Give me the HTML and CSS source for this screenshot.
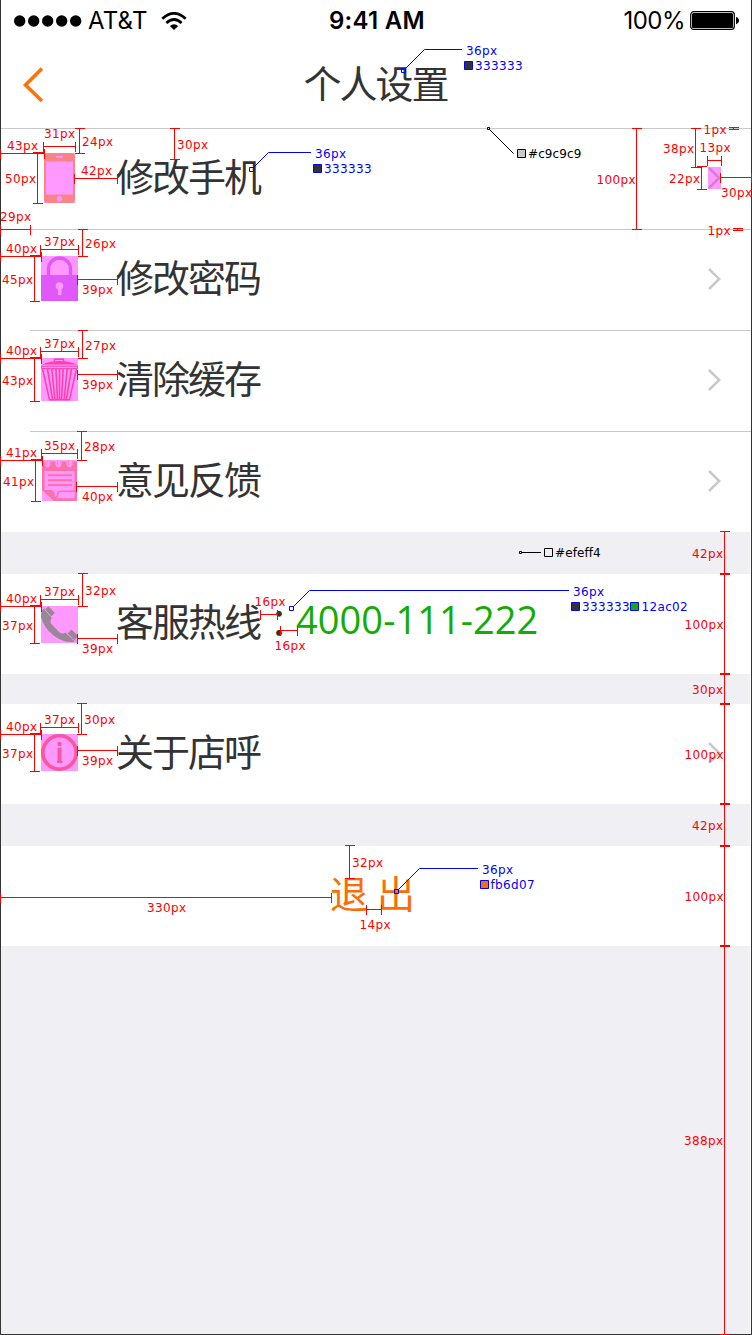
FILE: index.html
```html
<!DOCTYPE html>
<html lang="zh-CN">
<head>
<meta charset="utf-8">
<title>个人设置</title>
<link rel="stylesheet" href="styles.css">
</head>
<body>
<div class="screen">
  <header class="status">
    <div class="status-side">
      <svg class="signal" width="68" height="12" viewBox="0 0 68 12"><circle cx="5.7" cy="6" r="5.7"/><circle cx="19.7" cy="6" r="5.7"/><circle cx="33.7" cy="6" r="5.7"/><circle cx="47.7" cy="6" r="5.7"/><circle cx="61.7" cy="6" r="5.7"/></svg>
      <span class="carrier">AT&amp;T</span>
      <svg class="wifi" width="26" height="18" viewBox="0 0 26 18" fill="none" stroke="#000" stroke-width="2.8"><path d="M1.3 6.8Q13-4 24.7 6.8M5.4 11Q13 4 20.6 11"/><path d="M8.8 14Q13 10.5 17.2 14L13 18Z" fill="#000" stroke="none"/></svg>
    </div>
    <span class="time">9:41 AM</span>
    <div class="status-side status-right">
      <span class="percent">100%</span>
      <svg class="battery" width="50" height="20" viewBox="0 0 50 20"><rect x=".7" y=".7" width="43.6" height="17.8" rx="3" fill="none" stroke="#000" stroke-width="1.2"/><rect x="2" y="2" width="41" height="15.2" rx="1.5"/><path d="M46 6q3 1 3 3.6T46 13.200z"/></svg>
    </div>
  </header>
  <nav class="navbar">
    <svg class="back" width="22" height="36" viewBox="0 0 22 36"><path d="M20 1.500L3.500 18L20 34" fill="none" stroke="#ff7209" stroke-width="3.600"/></svg>
    <h1 class="title">个人设置</h1>
  </nav>
  <main>
    <section class="group">
      <div class="row">
        <svg class="icon icon-mobile" width="31" height="50" viewBox="0 0 31 50"><rect class="slice" width="31" height="50"/><rect width="31" height="50" rx="4" fill="#f88488"/><path class="slice" d="M2 8.500h27v33H2zM12 3h7v1.500h-7z"/><circle class="slice" cx="15.500" cy="45.800" r="2.700"/></svg>
        <span class="label">修改手机</span>
        <svg class="arrow arrow-sliced" width="13" height="22" viewBox="0 0 13 22"><rect class="slice" width="13" height="22"/><path d="M1 1L11.200 11L1 21"/></svg>
      </div>
      <div class="row line">
        <svg class="icon icon-lock" width="37" height="45" viewBox="0 0 37 45"><rect class="slice" width="37" height="45"/><path d="M7.500 20V13a11 11 0 0 1 22 0V20" fill="none" stroke="#e058fa" stroke-width="3.400"/><path d="M0 19h37v26H0z" fill="#e058fa"/><circle class="slice" cx="18.500" cy="30" r="3.800"/><path class="slice" d="M17 31h3.500v8H17z"/></svg>
        <span class="label">修改密码</span>
        <svg class="arrow" width="13" height="22" viewBox="0 0 13 22"><path d="M1 1L11.200 11L1 21"/></svg>
      </div>
      <div class="row line">
        <svg class="icon icon-trash" width="37" height="43" viewBox="0 0 37 43"><rect class="slice" width="37" height="43"/><g fill="none" stroke="#ff3fae"><path d="M13.500 3V1.200h9V3" stroke-width="1.500"/><path d="M1 6.500Q8 3 18.500 3T36 6.500z" fill="#ff3fae" stroke="none"/><path d="M.7 8.200h35.600v2.400H.7z" stroke-width="1"/><path d="M1.600 11L8.500 41.800h20L35.400 11" stroke-width="1.500"/><path d="M6.500 11l5 30M10.800 11l3 30M14.900 11l1.500 30M18.500 11v30M22.100 11l-1.500 30M26.200 11l-3 30M30.500 11l-5 30" stroke-width="1.600"/></g></svg>
        <span class="label">清除缓存</span>
        <svg class="arrow" width="13" height="22" viewBox="0 0 13 22"><path d="M1 1L11.200 11L1 21"/></svg>
      </div>
      <div class="row line">
        <svg class="icon icon-note" width="35" height="41" viewBox="0 0 35 41"><rect class="slice" width="35" height="41"/><path d="M0 1.500h2.500V5q3 5 6 0V1.500h5V5q3 5 6 0V1.500h5V5q3 5 6 0V1.500H35V41H12L0 30z" fill="#fe70a8"/><path d="M4 0v5M15.500 0v5M26.500 0v5M8 0v5M19 0v5M31 0v5" stroke="#fe86b6" stroke-width="1"/><path class="slice" d="M2.500 11h30v28H13.500Q8 34 7 30H2.500z"/><path d="M3 30h5q4 0 4.500 3l.5 4q2-1 2-3 0-3.500 4-3.500h13.500V39H13z" fill="#fe70a8"/><path class="slice" d="M14 38.200q2.500-1 2.500-3.700 0-2.500 3-2.500h13v6.200z"/><path d="M6 15.200h24M6 20.200h24M6 25h24" stroke="#fe70a8" stroke-width="2"/></svg>
        <span class="label">意见反馈</span>
        <svg class="arrow" width="13" height="22" viewBox="0 0 13 22"><path d="M1 1L11.200 11L1 21"/></svg>
      </div>
    </section>
    <section class="group group-hotline">
      <div class="row">
        <svg class="icon icon-tel" width="37" height="37" viewBox="0 0 37 37"><rect class="slice" width="37" height="37"/><path d="M3 2Q0 5 0 11Q3 22 12 29Q22 37 32 36L35 34.800L24.500 26Q22 29 18 26L10 17.500Q8.500 14.500 11 12z" fill="#998798"/><path d="M5.500 2L12 8.800M28.500 25.500L35.500 32" stroke="#998798" stroke-width="5.400"/><path d="M2.500 2.200L12 12.500M24 26L34.500 35.500" stroke="#ff99ff" stroke-width=".9"/></svg>
        <span class="label">客服热线</span><span class="colon">：</span><span class="tel">4000-111-222</span>
      </div>
    </section>
    <section class="group group-about">
      <div class="row">
        <svg class="icon icon-info" width="37" height="37" viewBox="0 0 37 37"><rect class="slice" width="37" height="37"/><circle cx="18.500" cy="18.500" r="16.700" fill="none" stroke="#fc559f" stroke-width="3.600"/><circle cx="18.500" cy="10" r="2.200" fill="#fc559f"/><path d="M16.500 13.800H20.500V27h1v2h-5.500v-2h.5z" fill="#fc559f"/></svg>
        <span class="label">关于店呼</span>
        <svg class="arrow" width="13" height="22" viewBox="0 0 13 22"><path d="M1 1L11.200 11L1 21"/></svg>
      </div>
    </section>
    <section class="group group-logout">
      <div class="row logout"><span>退</span><span>出</span></div>
    </section>
  </main>

  <!-- Spec layer: dimensions and colour callouts -->
  <svg class="spec" width="752" height="1335" viewBox="0 0 752 1335">
    <g class="dims" transform="translate(.5 .5)">
      <path d="M0 153H44M0 148V158M44 148V158M32 152H43M37 152V203M32 203H42M43 146H75M43 141V151M75 141V151M79 128V153M74 128H84M74 153H84M74 178H117M74 173V183M117 173V183M174 128V159M169 128H179M169 159H179M0 229H30M30 224V234M0 224V234"/>
      <path d="M0 256H41M0 251V261M41 251V261M29 255H40M34 255V301M29 301H39M40 249H78M40 244V254M78 244V254M82 229V256M77 229H87M77 256H87M77 279H117M77 274V284M117 274V284"/>
      <path d="M0 358H41M0 353V363M41 353V363M29 357H40M34 357V401M29 401H39M40 351H78M40 346V356M78 346V356M82 330V358M77 330H87M77 358H87M77 374H117M77 369V379M117 369V379"/>
      <path d="M0 460H42M0 455V465M42 455V465M30 459H41M35 459V501M30 501H40M41 453H77M41 448V458M77 448V458M81 431V460M76 431H86M76 460H86M76 486H117M76 481V491M117 481V491"/>
      <path d="M0 606H41M0 601V611M41 601V611M29 605H40M34 605V643M29 643H39M40 599H78M40 594V604M78 594V604M82 573V606M77 573H87M77 606H87M77 638H117M77 633V643M117 633V643M260 614H277M260 609V619M277 609V619M280 630H297M280 625V635M297 625V635"/>
      <path d="M0 734H41M0 729V739M41 729V739M29 733H40M34 733V771M29 771H39M40 727H78M40 722V732M78 722V732M81 703V734M76 703H86M76 734H86M77 750H117M77 745V755M117 745V755"/>
      <path d="M636 128V229M631 128H641M631 229H641M695 128V167M690 128H700M690 167H700M701 166V189M696 166H706M696 189H706M707 160H721M707 155V165M721 155V165M720 177H751M720 172V182M751 172V182M728 127H738M728 129H738M733 127V129M732 228H742M732 230H742M737 228V230"/>
      <path d="M0 897H331M331 892V902M0 892V902M349 845V878M344 845H354M344 878H354M366 909H381M366 904V914M381 904V914"/>
      <path d="M724 531V1334M719 531H729M719 573H729M719 574H729M719 673H729M719 674H729M719 703H729M719 704H729M719 803H729M719 804H729M719 845H729M719 846H729M719 945H729M719 946H729M719 1334H729"/>
    </g>
    <g class="dim-text">
      <text x="7" y="150">43px</text><text x="44" y="138">31px</text><text x="82" y="146">24px</text><text x="81" y="175">42px</text><text x="5" y="183">50px</text><text x="0" y="221">29px</text><text x="177" y="149">30px</text>
      <text x="6" y="253">40px</text><text x="44" y="246">37px</text><text x="85" y="248">26px</text><text x="2" y="284">45px</text><text x="82" y="294">39px</text>
      <text x="6" y="355">40px</text><text x="44" y="348">37px</text><text x="85" y="350">27px</text><text x="2" y="385">43px</text><text x="82" y="389">39px</text>
      <text x="6" y="457">41px</text><text x="44" y="450">35px</text><text x="84" y="451">28px</text><text x="3" y="486">41px</text><text x="82" y="501">40px</text>
      <text x="6" y="603">40px</text><text x="44" y="596">37px</text><text x="85" y="595">32px</text><text x="2" y="630">37px</text><text x="82" y="653">39px</text><text x="254.500" y="606">16px</text><text x="274.500" y="650">16px</text>
      <text x="6" y="731">40px</text><text x="44" y="724">37px</text><text x="84" y="724">30px</text><text x="2" y="758">37px</text><text x="82" y="765">39px</text>
      <text x="596.500" y="184">100px</text><text x="663" y="153">38px</text><text x="699.500" y="152">13px</text><text x="669" y="183">22px</text><text x="721" y="197">30px</text><text x="703.500" y="134">1px</text><text x="707.500" y="235">1px</text>
      <text x="692" y="558">42px</text><text x="684.500" y="629">100px</text><text x="692" y="694">30px</text><text x="684.500" y="759">100px</text><text x="692" y="830">42px</text><text x="684.500" y="901">100px</text><text x="684" y="1145">388px</text>
      <text x="147" y="912">330px</text><text x="352" y="867">32px</text><text x="359.500" y="929">14px</text>
    </g>
    <g class="callout">
      <path d="M405 69L424.500 49.500H462M253 168L268.500 152.500H311M293 607L309.500 590.500H569M398 890L419.500 868.500H478"/>
      <path d="M401.500 68.500h4v4h-4zM249.500 167.500h4v4h-4zM289.500 606.500h4v4h-4zM394.500 889.500h4v4h-4z"/>
      <path fill="#333" d="M464.500 61.500h8v8h-8zM313.500 164.500h8v8h-8zM571.500 602.500h8v8h-8z"/>
      <path fill="#12ac02" d="M630.500 602.500h8v8h-8z"/>
      <path fill="#fb6d07" d="M480.500 880.500h8v8h-8z"/>
    </g>
    <g class="callout-text">
      <text x="466" y="55">36px</text><text x="475" y="70">333333</text>
      <text x="315" y="158">36px</text><text x="324" y="173">333333</text>
      <text x="573" y="596">36px</text><text x="582" y="611">333333</text><text x="641.500" y="611">12ac02</text>
      <text x="482" y="874">36px</text><text x="490.500" y="889">fb6d07</text>
    </g>
    <g class="line-note">
      <path d="M489 129L513.500 153.500M521 552.500H541"/>
      <path fill="#fff" d="M487.500 127.500h2v2h-2zM519.500 551.500h2v2h-2z"/>
      <path fill="#c9c9c9" d="M517.500 149.500h8v8h-8z"/>
      <path fill="#efeff4" d="M544.500 548.500h8v8h-8z"/>
      <text class="hex" x="528" y="158">#c9c9c9</text><text class="hex" x="555" y="557">#efeff4</text>
    </g>
  </svg>
</div>
</body>
</html>
```
FILE: styles.css
```css
* { box-sizing: border-box; }
body { margin: 0; background: #fff; }
svg { display: block; flex: none; }

.screen {
  position: relative;
  width: 752px;
  height: 1335px;
  border: 1px solid #333;
  border-top: 0;
  background: #fff;
  color: #333;
  font-family: "Open Sans", "Noto Sans CJK SC", sans-serif;
}

.status {
  display: grid;
  grid-template-columns: 1fr auto 1fr;
  align-items: center;
  height: 40px;
  padding: 0 11px 0 13px;
  color: #000;
  font: 24px/40px Inter, sans-serif;
}
.status-side { display: flex; align-items: center; }
.status-right { justify-content: flex-end; }
.carrier { margin-left: 6px; width: 60px; padding-top: 1px; letter-spacing: .2px; }
.wifi { margin-left: 13px; }
.time { padding-top: 1px; font-weight: 600; letter-spacing: .3px; }
.percent { padding-top: 1px; margin-right: 5px; letter-spacing: -.5px; }

.navbar {
  display: flex;
  align-items: center;
  height: 89px;
  padding-left: 21px;
  border-bottom: 1px solid #c9c9c9;
}
.back { margin-top: 1px; }
.title {
  flex: 1;
  margin: 0 44px 0 0;
  text-align: center;
  font-size: 38px;
  font-weight: 400;
  line-height: 87px;
  height: 88px;
  letter-spacing: -2px;
}

.row {
  display: flex;
  height: 100px;
}
.row.line {
  height: 101px;
  background: linear-gradient(#c9c9c9, #c9c9c9) 29px 0 / 721px 1px no-repeat;
}
.slice { fill: #ff99ff; }

.icon { margin: 24px 38px 0 40px; }
.icon-mobile { margin-left: 43px; margin-right: 41px; }
.icon-lock { margin-top: 27px; }
.icon-trash { margin-top: 28px; }
.icon-note { margin: 29px 39px 0 41px; }
.icon-tel { margin-top: 32px; }
.icon-info { margin-top: 30px; }

.label, .colon, .tel {
  font-size: 38px;
  line-height: 94px;
  letter-spacing: -2px;
  white-space: nowrap;
}
.line .label { line-height: 97px; }
.colon {
  width: 36px;
  letter-spacing: 0;
  font-family: "Noto Sans CJK JP", sans-serif;
}
.tel {
  color: #12ac02;
  line-height: 90px;
  letter-spacing: .05px;
}
.arrow { margin: 38px 30px 0 auto; }
.line .arrow { margin-top: 39px; }
.arrow path { fill: none; stroke: #c9c9c9; stroke-width: 2.5; }
.arrow-sliced path { stroke: #d57ed5; }

.group-hotline,
.group-about,
.group-logout { margin-right: 1px; }
.group-hotline { border-top: 42px solid #efeff4; }
.group-about { border-top: 30px solid #efeff4; }
.group-about .arrow { margin-right: 29px; }
.group-logout {
  border-top: 42px solid #efeff4;
  border-bottom: 388px solid #efeff4;
}
.logout {
  padding-left: 329px;
  gap: 9px;
  color: #fb6d07;
  font-size: 38px;
  line-height: 94px;
}

.spec { position: absolute; top: 0; left: -1px; }
.spec text {
  font: 12px "DejaVu Sans", Verdana, sans-serif;
  letter-spacing: .35px;
}
.spec .hex { letter-spacing: .1px; }
.dims { fill: none; stroke: #f00; shape-rendering: crispEdges; }
.dim-text { fill: #f00; }
.callout { fill: none; stroke: #00f; }
.callout-text { fill: #00f; }
.line-note path { stroke: #000; }
```
